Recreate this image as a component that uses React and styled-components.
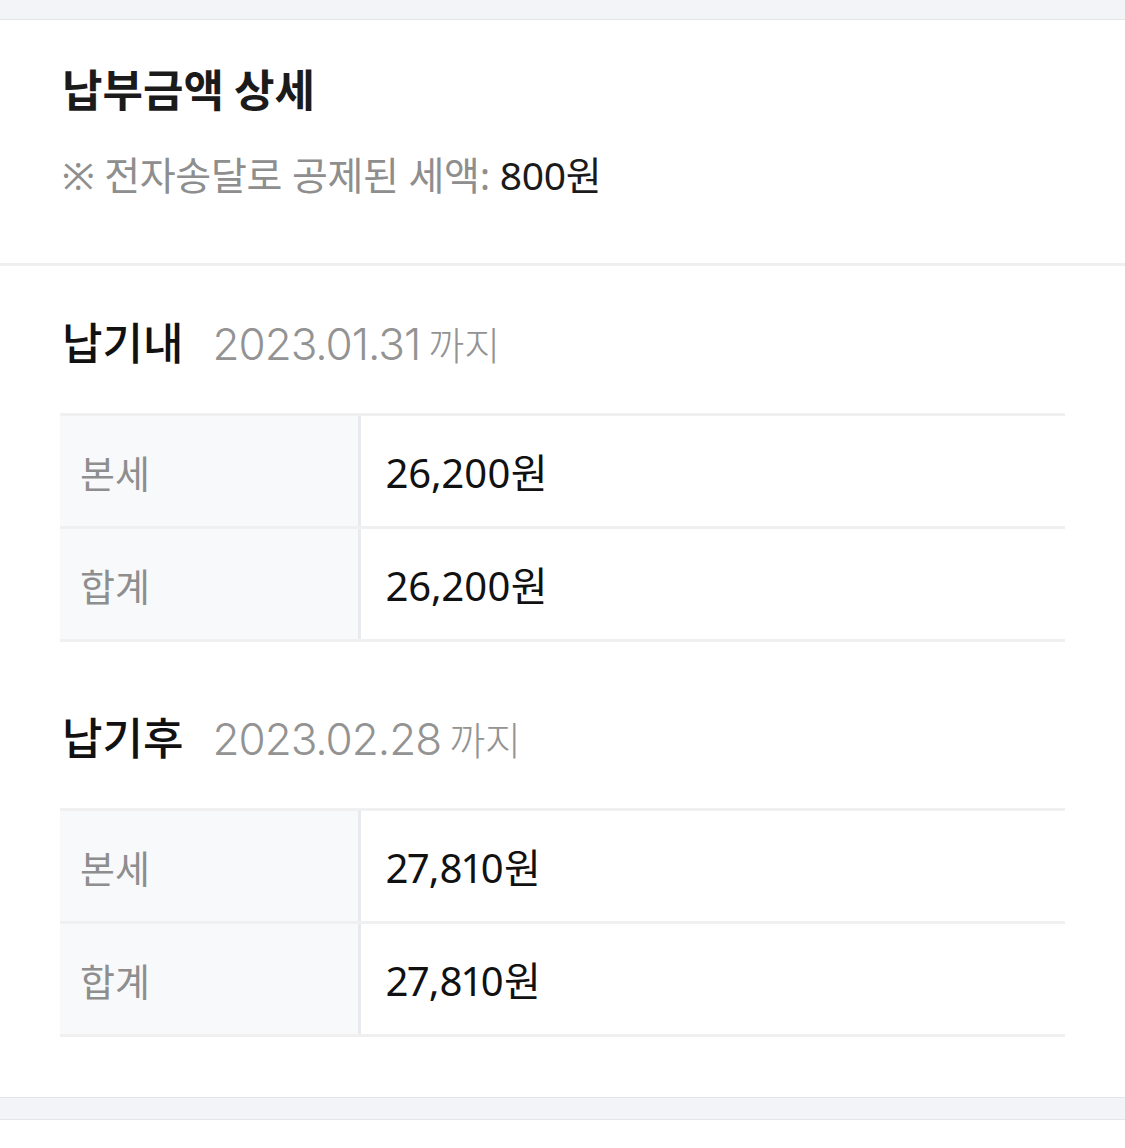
import React from 'react';
import styled, { createGlobalStyle } from 'styled-components';

const GlobalStyle = createGlobalStyle`
  html, body {
    margin: 0;
    padding: 0;
    background: #ffffff;
  }
  body {
    font-family: 'Noto Sans', 'Noto Sans CJK KR', sans-serif;
    color: #111111;
  }
`;

const Page = styled.div`
  width: 1125px;
  min-height: 1148px;
  background: #ffffff;
`;

const Band = styled.div`
  height: ${(p) => p.$height}px;
  background: #f3f4f7;
  border-top: ${(p) => (p.$top ? '1px solid #e4e5e9' : 'none')};
  border-bottom: 1px solid #e4e5e9;
`;

const Summary = styled.section`
  padding: 40px 62px 64px;
  border-bottom: 3px solid #efefef;
`;

const Title = styled.h1`
  margin: 0;
  font-family: 'Noto Sans CJK KR', sans-serif;
  font-size: 44px;
  font-weight: 700;
  line-height: 56px;
  color: #1b1b1b;
`;

const Note = styled.p`
  margin: 35px 0 0;
  font-family: 'Noto Sans', 'Noto Sans CJK KR', sans-serif;
  font-size: 39px;
  font-weight: 400;
  line-height: 48px;
  color: #8e8e8e;
  letter-spacing: -0.3px;

  strong {
    font-weight: 400;
    color: #1b1b1b;
  }
`;

const Details = styled.div`
  padding: 47px 60px 60px;
`;

const Period = styled.div`
  & + & {
    margin-top: 66px;
  }
`;

const PeriodHead = styled.div`
  display: flex;
  align-items: baseline;
  gap: 29px;
  padding-left: 2px;
  height: 56px;
`;

const PeriodName = styled.h2`
  margin: 0;
  font-family: 'Noto Sans CJK KR', sans-serif;
  font-size: 44px;
  font-weight: 500;
  line-height: 56px;
  color: #111111;
`;

const DueDate = styled.span`
  font-family: 'Inter', 'Liberation Sans', sans-serif;
  font-size: 44px;
  font-weight: 300;
  line-height: 56px;
  letter-spacing: -1px;
  color: #939393;

  small {
    margin-left: 8px;
    font-family: 'Noto Sans CJK KR', sans-serif;
    font-size: 39px;
    letter-spacing: 0;
  }
`;

const Table = styled.div`
  margin-top: 44px;
  border-top: 3px solid #f0f0f0;
`;

const Row = styled.div`
  display: grid;
  grid-template-columns: 301px 1fr;
  height: 110px;
  border-bottom: 3px solid #f0f0f0;
`;

const Label = styled.div`
  display: flex;
  align-items: center;
  padding-left: 20px;
  background: #f8f9fb;
  border-right: 3px solid #e9eaee;
  font-family: 'Noto Sans CJK KR', sans-serif;
  font-size: 38px;
  color: #8e8e8e;
`;

const Value = styled.div`
  display: flex;
  align-items: center;
  padding-left: 25px;
  font-family: 'Noto Sans', 'Noto Sans CJK KR', sans-serif;
  font-size: 40px;
  font-variant-numeric: proportional-nums;
  color: #111111;
`;

const periods = [
  {
    name: '납기내',
    date: '2023.01.31',
    rows: [
      ['본세', '26,200원'],
      ['합계', '26,200원'],
    ],
  },
  {
    name: '납기후',
    date: '2023.02.28',
    rows: [
      ['본세', '27,810원'],
      ['합계', '27,810원'],
    ],
  },
];

const App = () => {
  return (
    <Page>
      <GlobalStyle />
      <Band $height={19} />
      <Summary>
        <Title>납부금액 상세</Title>
        <Note>
          ※ 전자송달로 공제된 세액: <strong>800원</strong>
        </Note>
      </Summary>
      <Details>
        {periods.map((p) => (
          <Period key={p.name}>
            <PeriodHead>
              <PeriodName>{p.name}</PeriodName>
              <DueDate>
                {p.date}
                <small>까지</small>
              </DueDate>
            </PeriodHead>
            <Table>
              {p.rows.map(([label, value]) => (
                <Row key={label}>
                  <Label>{label}</Label>
                  <Value>{value}</Value>
                </Row>
              ))}
            </Table>
          </Period>
        ))}
      </Details>
      <Band $height={21} $top />
    </Page>
  );
};

export default App;
